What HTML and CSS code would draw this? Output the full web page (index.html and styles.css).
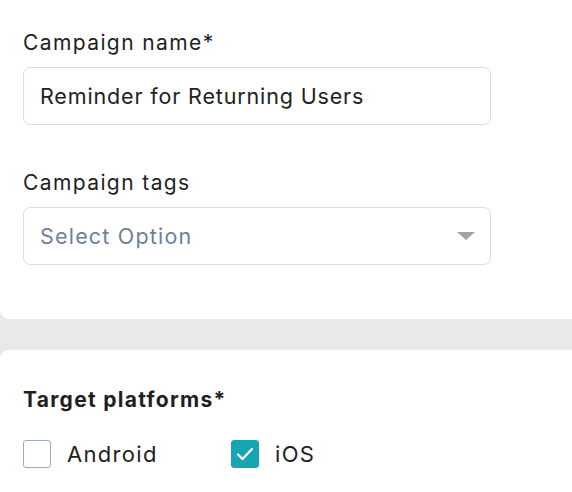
FILE: index.html
```html
<!DOCTYPE html>
<html>
<head>
<meta charset="utf-8">
<link rel="stylesheet" href="styles.css">
</head>
<body>
<div class="page">
  <section class="card card-top">
    <div class="field">
      <label class="label">Campaign name*</label>
      <div class="input">Reminder for Returning Users</div>
    </div>
    <div class="field">
      <label class="label">Campaign tags</label>
      <div class="input select">
        <span class="placeholder">Select Option</span>
        <svg class="caret" width="18" height="8" viewBox="0 0 18 8"><path d="M0 0 H18 L9 8 Z" fill="#a3a3a3"/></svg>
      </div>
    </div>
  </section>
  <section class="card card-bottom">
    <h2 class="section-title">Target platforms*</h2>
    <div class="options">
      <label class="option">
        <span class="box"></span>
        <span class="opt-text">Android</span>
      </label>
      <label class="option">
        <span class="box checked">
          <svg width="18" height="14" viewBox="0 0 18 14"><path d="M2 7.5 L6.5 12 L16 2" fill="none" stroke="#fff" stroke-width="2.2" stroke-linecap="round" stroke-linejoin="round"/></svg>
        </span>
        <span class="opt-text">iOS</span>
      </label>
    </div>
  </section>
</div>
</body>
</html>
```
FILE: styles.css
```css
html, body {
  margin: 0;
  padding: 0;
  background: #e9e9e9;
  font-family: "Inter", "Open Sans", sans-serif;
  color: #1f1f1f;
}
.page {
  width: 572px;
  height: 492px;
  overflow: hidden;
}
.card {
  background: #ffffff;
  width: 600px;
  box-sizing: border-box;
  padding-left: 23px;
}
.card-top {
  border-radius: 0 0 0 9px;
  padding-top: 28px;
  padding-bottom: 54px;
}
.card-bottom {
  margin-top: 31px;
  border-radius: 9px 0 0 0;
  padding-top: 35px;
  height: 200px;
}
.field {
  display: flex;
  flex-direction: column;
}
.field + .field {
  margin-top: 43px;
}
.label {
  font-size: 21px;
  line-height: 30px;
  margin-bottom: 9px;
  letter-spacing: 1.4px;
}
.input {
  width: 468px;
  height: 58px;
  box-sizing: border-box;
  border: 1px solid #d9deea;
  border-radius: 7px;
  padding-left: 16px;
  display: flex;
  align-items: center;
  font-size: 21.5px;
  letter-spacing: 0.85px;
  color: #222;
}
.select {
  justify-content: space-between;
  padding-right: 15px;
}
.placeholder {
  color: #6f7f99;
  letter-spacing: 1.2px;
}
.section-title {
  margin: 0;
  font-size: 21px;
  line-height: 30px;
  font-weight: 700;
  letter-spacing: 1.3px;
}
.options {
  display: flex;
  margin-top: 25px;
  gap: 0;
}
.option {
  display: flex;
  align-items: center;
  width: 208px;
}
.box {
  width: 28px;
  height: 28px;
  box-sizing: border-box;
  border: 1.5px solid #9aaacb;
  border-radius: 3px;
  display: flex;
  align-items: center;
  justify-content: center;
}
.box.checked {
  background: #17a4b3;
  border-color: #17a4b3;
}
.opt-text {
  margin-left: 16px;
  font-size: 22px;
  letter-spacing: 1.3px;
}
```
